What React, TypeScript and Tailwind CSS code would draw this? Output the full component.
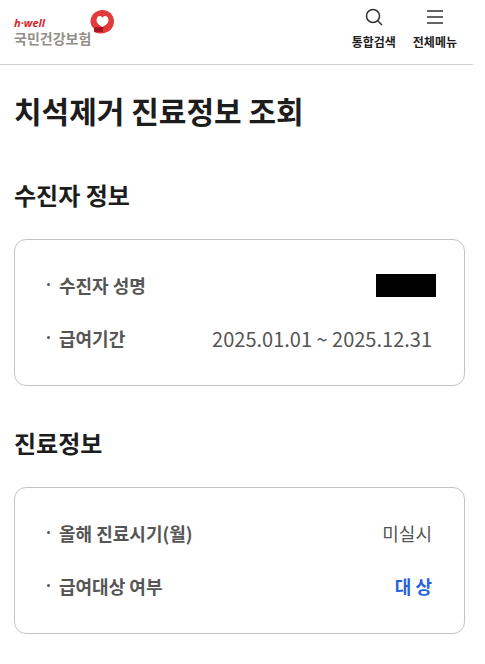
import React from 'react';

function Logo() {
  return (
    <a href="#" aria-label="h-well 국민건강보험" className="flex items-start">
      <span className="flex flex-col pt-4">
        <span className="font-['Open_Sans',sans-serif] text-[11px] leading-[14px] font-bold italic text-[#d9262c]">
          h·well
        </span>
        <span className="text-sm leading-4 font-bold text-[#928f86]">국민건강보험</span>
      </span>
      <svg viewBox="0 0 26 26" className="-ml-0.5 mt-2 h-[26px] w-[26px]" aria-hidden="true">
        <path d="M13.500 2C20 2 25 7 25 13.500C25 20.500 19.500 25.500 11.500 25.500C8.500 25.500 6.500 24.800 5 23.800V20.500C2.500 18.500 1.500 16 1.500 13.500C1.500 7 7 2 13.500 2Z" fill="#e03a3a" />
        <path d="M5 19.500L14.500 19L13.500 24L5 23.800Z" fill="#a8131b" />
        <path d="M13.500 19C9 16.500 7.500 14.500 7.500 12C7.500 8 11.800 6.800 13.500 9.800C15.200 6.800 19.500 8 19.500 12C19.500 14.500 18 16.500 13.500 19Z" fill="#fff" />
      </svg>
    </a>
  );
}

function NavButton({ label, children }: { label: string; children: React.ReactNode }) {
  return (
    <button type="button" className="flex flex-col items-center gap-2 text-[#1d1d1d]">
      <svg viewBox="0 0 18 18" className="h-[18px] w-[18px]" fill="none" stroke="#333" strokeWidth="1.500" aria-hidden="true">
        {children}
      </svg>
      <span className="text-xs leading-4 font-bold">{label}</span>
    </button>
  );
}

function Row({ label, children }: { label: string; children: React.ReactNode }) {
  return (
    <div className="flex items-center justify-between">
      <dt className="flex items-center gap-[9px] font-bold text-[#555]">
        <span className="mb-0.5 h-[3px] w-[3px] rounded-full bg-[#555]" />
        {label}
      </dt>
      <dd className="text-[#555]">{children}</dd>
    </div>
  );
}

function Section({ title, children }: { title: string; children: React.ReactNode }) {
  return (
    <section className="mt-10">
      <h2 className="text-2xl leading-[34px] font-bold">{title}</h2>
      <dl className="mt-[27px] flex flex-col gap-[26px] rounded-xl border border-[#c4c4c4] px-8 pt-8 pb-[33px] text-lg leading-[27px]">
        {children}
      </dl>
    </section>
  );
}

export default function App() {
  return (
    <div className="min-h-screen bg-white pr-3 font-['Noto_Sans_CJK_KR',sans-serif] text-[#1d1d1d]">
      <header className="flex h-[65px] items-start justify-between border-b border-[#d0d0d0] pr-4 pl-3.5">
        <Logo />
        <nav className="flex gap-[17px] pt-2">
          <NavButton label="통합검색">
            <circle cx="8" cy="8" r="6.500" />
            <path d="M12.700 12.700L17 17" />
          </NavButton>
          <NavButton label="전체메뉴">
            <path d="M1 3H17M1 9H17M1 15H17" />
          </NavButton>
        </nav>
      </header>
      <main className="pt-[22px] pr-2 pb-8 pl-3.5">
        <h1 className="pb-1 text-3xl leading-[47px] font-bold">치석제거 진료정보 조회</h1>
        <Section title="수진자 정보">
          <Row label="수진자 성명">
            <span className="-mr-1 block h-[23px] w-[60px] bg-black" />
          </Row>
          <Row label="급여기간">
            <span className="block text-xl leading-[27px]">2025.01.01 ~ 2025.12.31</span>
          </Row>
        </Section>
        <Section title="진료정보">
          <Row label="올해 진료시기(월)">미실시</Row>
          <Row label="급여대상 여부">
            <strong className="font-bold text-[#2563d9]">대 상</strong>
          </Row>
        </Section>
      </main>
    </div>
  );
}
